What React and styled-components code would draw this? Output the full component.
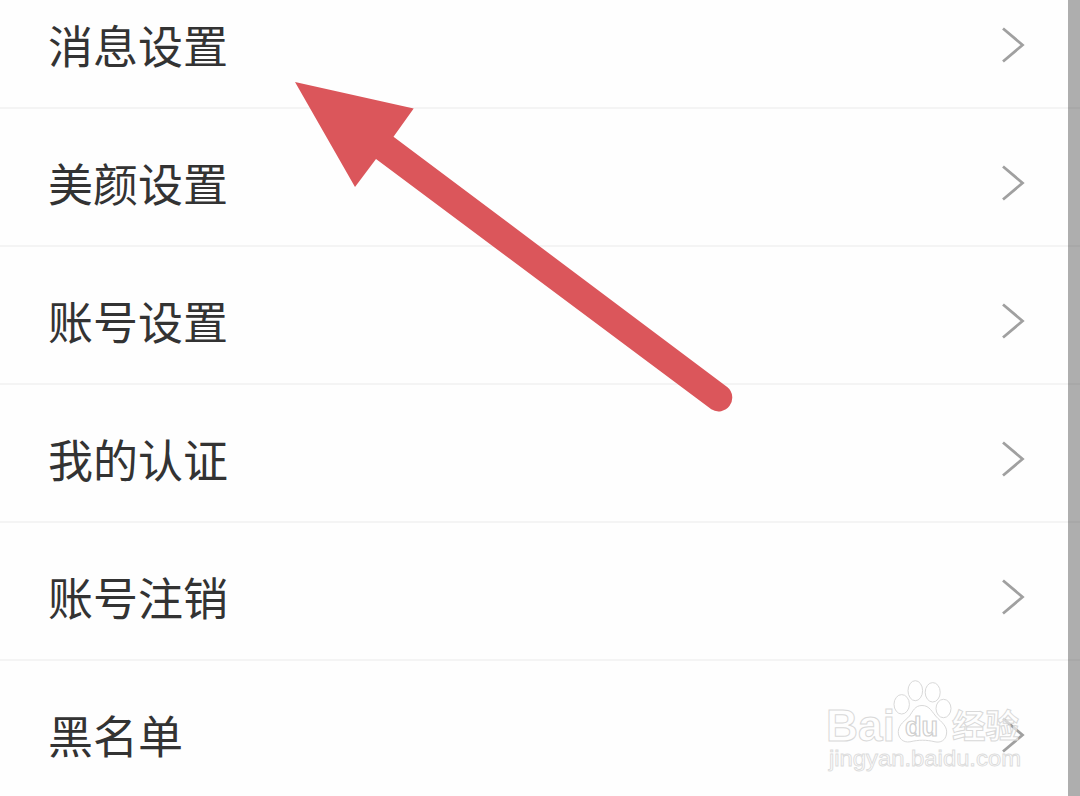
import styled, { createGlobalStyle } from 'styled-components';

const items = ['消息设置', '美颜设置', '账号设置', '我的认证', '账号注销', '黑名单']

const App = () => {
    return (
        <Page>
            <GlobalStyle />
            <List>
                {items.map((item) => (
                    <Row key={item}>
                        <Label>{item}</Label>
                        <Chevron viewBox="0 0 24 38">
                            <path d="M2 2.5L21.5 19L2 35.5" />
                        </Chevron>
                    </Row>
                ))}
            </List>
            <Side />
            <Arrow viewBox="0 0 450 340">
                <path d="M5 2L123.700 28.500L103.500 56.700L437.500 307.300A13.700 13.700 0 0 1 421.300 329.300L86 79L65 107Z" />
            </Arrow>
            <Watermark viewBox="0 0 210 120">
                <text className="bai" x="4" y="77" fontSize="45" fontWeight="700" textLength="69" lengthAdjust="spacingAndGlyphs">Bai</text>
                <ellipse cx="79.700" cy="40.300" rx="7.700" ry="9.700" />
                <ellipse cx="93.300" cy="26.700" rx="7.300" ry="10" />
                <ellipse cx="110.700" cy="28.300" rx="7.500" ry="9.700" />
                <ellipse cx="121.500" cy="44.500" rx="7.500" ry="9.200" />
                <path d="M100 41.500C108 41.500 109.500 48 116 54.500C122 60 125.500 64 124.500 70C123.500 76.500 118.500 79 113 77.800C104 75.700 97 75.700 88 77.800C81 79 76 74 76.300 67.500C76.800 60 83 57 87.500 52C91 47 93 41.500 100 41.500Z" />
                <text className="du" x="83" y="72" fontSize="27" textLength="33" lengthAdjust="spacingAndGlyphs">du</text>
                <text className="cjk" x="130" y="74" fontSize="33" fontWeight="700" textLength="67" lengthAdjust="spacingAndGlyphs">经验</text>
                <text className="url" x="7" y="102" fontSize="22.500" textLength="192" lengthAdjust="spacingAndGlyphs">jingyan.baidu.com</text>
            </Watermark>
        </Page>
    )
}

const GlobalStyle = createGlobalStyle`
    body {
        margin: 0;
        background: #fefefe;
        overflow: hidden;
    }
`

const Page = styled.div`
    position: relative;
    display: flex;
    width: 1080px;
    height: 796px;
    overflow: hidden;
    background: #fefefe;
    font-family: "Noto Sans CJK SC", sans-serif;
`

/* the list is scrolled a little, so the first row is cut at the top */
const List = styled.div`
    flex: 1;
    height: 828px;
    margin-top: -29px;
`

const Row = styled.div`
    box-sizing: border-box;
    display: flex;
    align-items: center;
    justify-content: space-between;
    height: 138px;
    padding: 12px 43px 0 48px;
    border-bottom: 2px solid #f4f4f4;
`

const Label = styled.span`
    color: #333;
    font-size: 45px;
    line-height: 60px;
`

const Chevron = styled.svg`
    width: 24px;
    height: 38px;
    fill: none;
    stroke: #a0a0a0;
    stroke-width: 2.8;
`

const Side = styled.div`
    width: 12px;
    background: repeating-linear-gradient(#aeaeae 0 107px, #a8a8a8 107px 109px, #aeaeae 109px 138px);
`

const Arrow = styled.svg`
    position: absolute;
    left: 290px;
    top: 80px;
    width: 450px;
    height: 340px;
    fill: #db565b;
`

const Watermark = styled.svg`
    position: absolute;
    left: 822px;
    top: 664px;
    width: 210px;
    height: 120px;
    overflow: visible;
    fill: rgba(255, 255, 255, 0.6);
    stroke: #d9d9d9;
    stroke-width: 1;

    .bai {
        font-family: "Liberation Sans", sans-serif;
    }

    .du {
        stroke: #cfcfcf;
        stroke-width: 1.2;
        font-family: "Liberation Sans", sans-serif;
        font-weight: 700;
    }

    .cjk {
        font-family: "Noto Sans CJK SC", sans-serif;
    }

    .url {
        stroke: #dcdcdc;
        stroke-width: 0.9;
        font-family: "Liberation Sans", sans-serif;
    }
`

export default App
